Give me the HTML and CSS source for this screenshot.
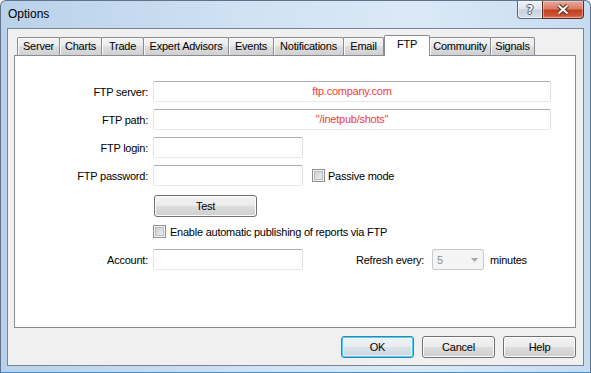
FILE: index.html
```html
<!DOCTYPE html>
<html>
<head>
<meta charset="utf-8">
<title>Options</title>
<link rel="stylesheet" href="styles.css">
</head>
<body>
<div class="window">
  <div class="titlebar">
    <span class="title">Options</span>
    <div class="caption-buttons">
      <div class="cbtn help"><span class="qmark">?</span></div>
      <div class="cbtn close">
        <svg width="14" height="11" viewBox="0 0 14 11">
          <path d="M2.5 1.5 L11.5 9.5 M11.5 1.5 L2.5 9.5" stroke="#5a2418" stroke-width="4.2" fill="none"/>
          <path d="M2.5 1.5 L11.5 9.5 M11.5 1.5 L2.5 9.5" stroke="#ffffff" stroke-width="2.2" fill="none"/>
        </svg>
      </div>
    </div>
  </div>
  <div class="client">
    <div class="tabs">
      <div class="tab t-server">Server</div>
      <div class="tab t-charts">Charts</div>
      <div class="tab t-trade">Trade</div>
      <div class="tab t-ea">Expert Advisors</div>
      <div class="tab t-events">Events</div>
      <div class="tab t-notif">Notifications</div>
      <div class="tab t-email">Email</div>
      <div class="tab t-ftp active">FTP</div>
      <div class="tab t-comm">Community</div>
      <div class="tab t-signals">Signals</div>
    </div>
    <div class="panel">
      <div class="form">
        <div class="row r-first">
          <span class="lbl">FTP server:</span>
          <div class="field long"><span class="value">ftp.company.com</span></div>
        </div>
        <div class="row r-next">
          <span class="lbl">FTP path:</span>
          <div class="field long"><span class="value">"/inetpub/shots"</span></div>
        </div>
        <div class="row r-next">
          <span class="lbl">FTP login:</span>
          <div class="field short"></div>
        </div>
        <div class="row r-next">
          <span class="lbl">FTP password:</span>
          <div class="field short"></div>
          <span class="check passive-check"></span>
          <span class="check-label">Passive mode</span>
        </div>
        <div class="row r-test">
          <div class="btn test-btn">Test</div>
        </div>
        <div class="row r-enable">
          <span class="check enable-check"></span>
          <span class="check-label enable-label">Enable automatic publishing of reports via FTP</span>
        </div>
        <div class="row r-account">
          <span class="lbl">Account:</span>
          <div class="field short"></div>
          <span class="refresh-label">Refresh every:</span>
          <div class="combo">
            <span>5</span>
            <svg width="7" height="4" viewBox="0 0 7 4"><path d="M0 0 H7 L3.5 4 Z" fill="#a6a6a6"/></svg>
          </div>
          <span class="minutes">minutes</span>
        </div>
      </div>
    </div>
    <div class="buttons">
      <div class="btn dlg-btn default">OK</div>
      <div class="btn dlg-btn">Cancel</div>
      <div class="btn dlg-btn">Help</div>
    </div>
  </div>
</div>
</body>
</html>
```

FILE: styles.css
```css
html, body {
  margin: 0;
  padding: 0;
  background: #ffffff;
}

body {
  font-family: "Liberation Sans", Arial, sans-serif;
  font-size: 11px;
  letter-spacing: -0.24px;
  color: #000;
}

.window {
  box-sizing: border-box;
  width: 591px;
  height: 373px;
  display: flex;
  flex-direction: column;
  padding: 0 6px 6px 6px;
  border: 1px solid #5f7489;
  border-bottom-color: #3f8fd2;
  border-radius: 6px 6px 0 0;
  background: linear-gradient(90deg, #b9d1ea 0%, #cfe1f3 40%, #dbe9f7 70%, #c7dcf1 100%);
}

.titlebar {
  flex: none;
  height: 27px;
  display: flex;
  justify-content: space-between;
  align-items: flex-start;
}

.title {
  font-size: 12px;
  letter-spacing: 0;
  line-height: 15px;
  margin: 6px 0 0 1px;
}

.caption-buttons {
  display: flex;
}

.cbtn {
  box-sizing: border-box;
  height: 18px;
  border: 1px solid #56677b;
  border-top: none;
  display: flex;
  align-items: center;
  justify-content: center;
}

.help {
  width: 26px;
  border-radius: 0 0 0 4px;
  background: linear-gradient(#eef3f8 0%, #dbe4ee 48%, #c5d1de 52%, #d5dfea 100%);
  box-shadow: inset 0 0 0 1px rgba(255, 255, 255, 0.6);
}

.qmark {
  font-family: "DejaVu Sans", sans-serif;
  font-weight: bold;
  font-size: 12px;
  letter-spacing: 0;
  line-height: 14px;
  color: #ffffff;
  text-shadow: 1px 0 #46556a, -1px 0 #46556a, 0 1px #46556a, 0 -1px #46556a;
}

.close {
  width: 42px;
  margin-left: -1px;
  border-color: #5c2a22;
  border-radius: 0 0 4px 0;
  background: linear-gradient(#e9ab9a 0%, #d97c66 45%, #c4401f 55%, #cd5334 85%, #e2866c 100%);
  box-shadow: inset 0 0 0 1px rgba(255, 220, 210, 0.45);
}

.client {
  flex: 1;
  display: flex;
  flex-direction: column;
  background: #f0f0f0;
  border: 1px solid #7a8593;
  padding: 0 7px 0 6px;
}

.tabs {
  flex: none;
  height: 27px;
  margin-bottom: -1px;
  padding-left: 3px;
  display: flex;
  align-items: flex-end;
  position: relative;
  z-index: 1;
}

.tab {
  box-sizing: border-box;
  height: 18px;
  margin-bottom: 1px;
  margin-left: -1px;
  border: 1px solid #898c95;
  border-bottom: none;
  border-radius: 2px 2px 0 0;
  background: linear-gradient(#f3f3f3 0%, #ebebeb 50%, #dedede 50%, #d0d0d0 100%);
  box-shadow: inset 1px 1px 0 #fbfbfb;
  text-align: center;
  line-height: 17px;
  white-space: nowrap;
}

.t-server { width: 43px; margin-left: 0; }
.t-charts { width: 43px; }
.t-trade { width: 43px; }
.t-ea { width: 86px; }
.t-events { width: 46px; }
.t-notif { width: 71px; }
.t-email { width: 41px; }
.t-ftp { width: 46px; margin-left: 0; }
.t-comm { width: 62px; }
.t-signals { width: 45px; }

.tab.active {
  height: 21px;
  margin-bottom: 0;
  padding-bottom: 3px;
  background: #ffffff;
  box-shadow: none;
  position: relative;
  z-index: 2;
}

.panel {
  flex: 1;
  background: #ffffff;
  border: 1px solid #898c95;
  display: flex;
  flex-direction: column;
}

.form {
  padding-top: 25px;
  display: flex;
  flex-direction: column;
}

.row {
  display: flex;
  align-items: center;
  height: 21px;
}

.r-next { margin-top: 7px; }
.r-test { margin-top: 9px; height: 22px; }
.r-enable { margin-top: 8px; height: 13px; }
.r-account { margin-top: 11px; }

.lbl {
  flex: none;
  width: 133px;
  margin-right: 5px;
  text-align: right;
  white-space: nowrap;
}

.field {
  box-sizing: border-box;
  height: 21px;
  border: 1px solid;
  border-color: #abadb3 #dbdfe6 #e3e9ef #e2e3ea;
  border-radius: 2px;
  background: #ffffff;
  display: flex;
  align-items: center;
  justify-content: center;
}

.field.long { width: 398px; }
.field.short { width: 150px; }

.value {
  color: #f23c3c;
  line-height: 19px;
}

.check {
  flex: none;
  box-sizing: border-box;
  width: 13px;
  height: 13px;
  border: 1px solid #8e8f8f;
  background: linear-gradient(135deg, #c3c7cc 0%, #e3e4e6 60%, #f7f7f7 100%);
  box-shadow: inset 0 0 0 1px #f4f4f4, inset 0 0 0 2px #b8bcc1;
}

.passive-check { margin-left: 9px; }
.enable-check { margin-left: 138px; }

.check-label {
  margin-left: 3px;
  white-space: nowrap;
}

.enable-label { margin-left: 4px; }

.btn {
  box-sizing: border-box;
  height: 22px;
  border: 1px solid #707070;
  border-radius: 3px;
  background: linear-gradient(#f2f2f2 0%, #ebebeb 50%, #dddddd 50%, #cfcfcf 100%);
  box-shadow: inset 0 0 0 1px #fcfcfc;
  display: flex;
  align-items: center;
  justify-content: center;
}

.test-btn {
  width: 103px;
  margin-left: 139px;
}

.refresh-label {
  flex: none;
  width: 76px;
  margin-left: 53px;
  white-space: nowrap;
}

.combo {
  box-sizing: border-box;
  width: 52px;
  height: 21px;
  border: 1px solid #c6c9cd;
  border-radius: 2px;
  background: #f4f4f4;
  color: #8f8f8f;
  display: flex;
  align-items: center;
  justify-content: space-between;
  padding: 0 5px 0 4px;
}

.minutes {
  margin-left: 6px;
}

.buttons {
  flex: none;
  display: flex;
  justify-content: flex-end;
  gap: 8px;
  margin: 8px 0 7px 0;
}

.dlg-btn {
  width: 73px;
}

.btn.default {
  border-color: #3c7fb1;
  background: linear-gradient(#f0f4f7 0%, #e7edf1 50%, #d8e2e9 50%, #cbd7df 100%);
  box-shadow: inset 0 0 0 1px #48d0f6, inset 0 0 0 2px rgba(255, 255, 255, 0.5);
}
```
